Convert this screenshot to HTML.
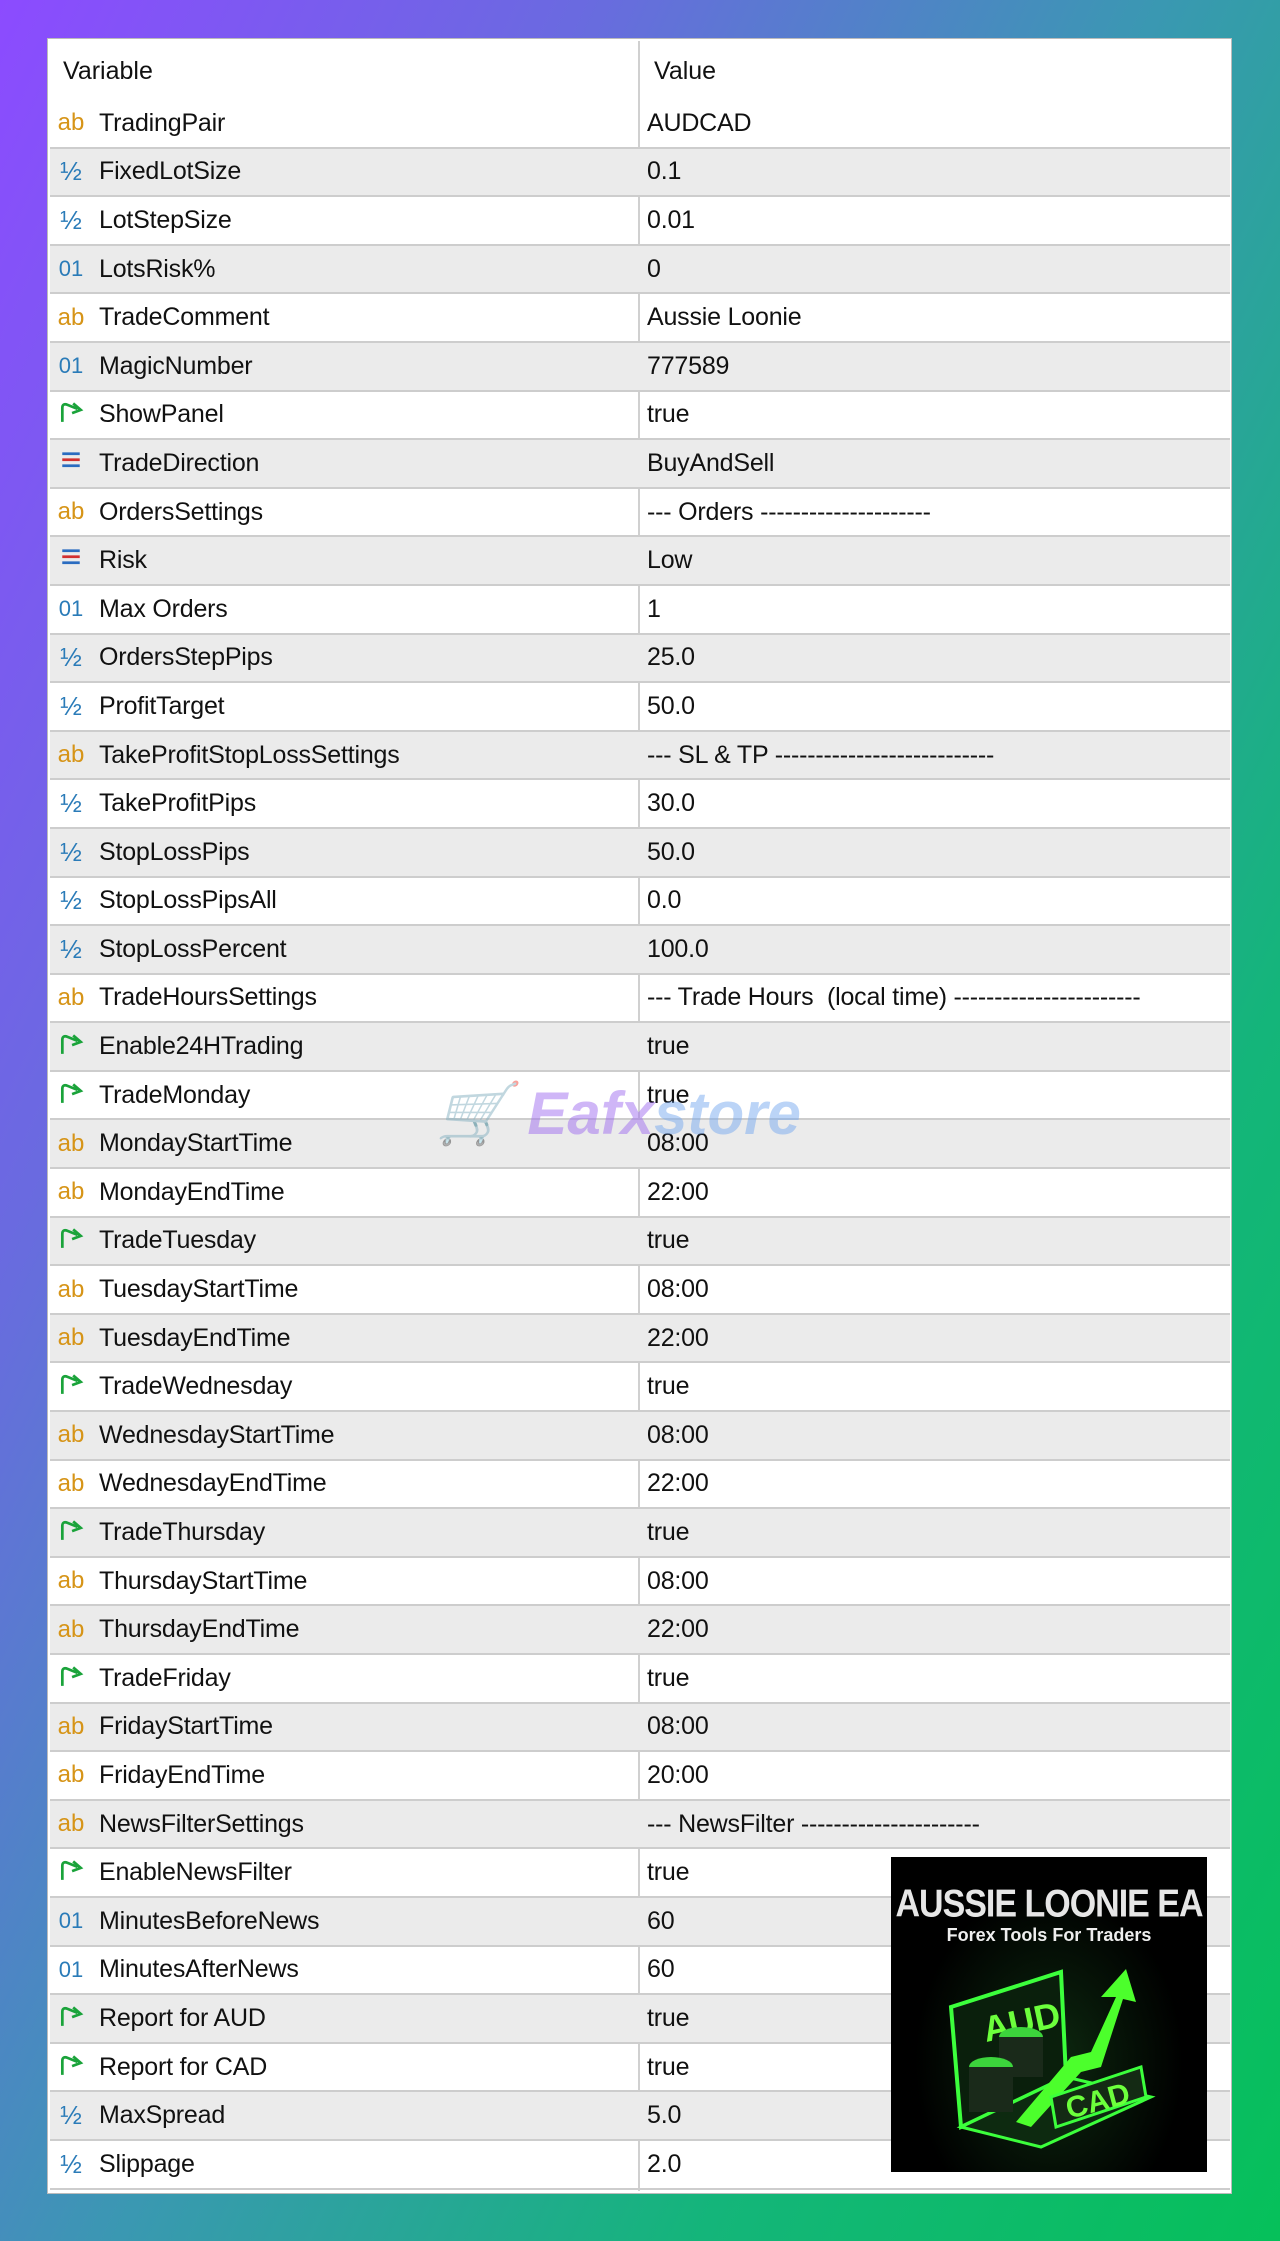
<!DOCTYPE html>
<html><head><meta charset="utf-8"><style>
*{margin:0;padding:0;box-sizing:border-box}
body{width:1280px;height:2241px;overflow:hidden;background:linear-gradient(115deg,#8c4bff 0%,#6a6ae0 25%,#3a98b2 50%,#14b57a 75%,#06c05a 100%);font-family:"Liberation Sans",sans-serif;position:relative}
#panel{position:absolute;left:47px;top:38px;width:1185px;height:2156px;background:#fff;border:1px solid #bbb}
.hdr{height:61px;position:relative;font-size:25px;color:#111}
.hdr span{position:absolute;top:18px}
.row{height:48.6px;display:flex;align-items:center;border-bottom:2px solid #cdcdcd;font-size:25px;color:#111;position:relative;width:1180px;margin-left:2px;letter-spacing:-0.2px}
.row.g{background:#ebebeb}
.ic{position:absolute;left:6px;width:30px;text-align:center;font-size:24px;letter-spacing:0}
.nm{position:absolute;left:49px}
.vl{position:absolute;left:597px}
.div{position:absolute;left:590px;top:2px;width:2px;height:2150px;background:#d0d0d0}
.ab{color:#d69417}
.hf{color:#2a7bb8;font-size:26px}
.i1{color:#2a7bb8;font-size:22px}
#logo{position:absolute;left:891px;top:1857px;width:316px;height:315px;background:radial-gradient(ellipse at 50% 65%,#0d2a10 0%,#000 60%);overflow:hidden}
#wm{position:absolute;left:436px;top:1078px;font-size:60px;font-weight:bold;font-style:italic;color:rgba(160,110,240,.5)}
#wm b{color:rgba(120,170,240,.5)}
</style></head><body>
<div id="panel">
<div class="div"></div>
<div class="hdr"><span style="left:15px">Variable</span><span style="left:606px">Value</span></div>
<div class="row"><span class="ic ab">ab</span><span class="nm">TradingPair</span><span class="vl">AUDCAD</span></div>
<div class="row g"><span class="ic hf">½</span><span class="nm">FixedLotSize</span><span class="vl">0.1</span></div>
<div class="row"><span class="ic hf">½</span><span class="nm">LotStepSize</span><span class="vl">0.01</span></div>
<div class="row g"><span class="ic i1">01</span><span class="nm">LotsRisk%</span><span class="vl">0</span></div>
<div class="row"><span class="ic ab">ab</span><span class="nm">TradeComment</span><span class="vl">Aussie Loonie</span></div>
<div class="row g"><span class="ic i1">01</span><span class="nm">MagicNumber</span><span class="vl">777589</span></div>
<div class="row"><span class="ic"><svg width="26" height="26" viewBox="0 0 24 24"><path d="M4 22V9Q4 5 8 6L18 10" fill="none" stroke="#1aa33a" stroke-width="2.5"/><path d="M14 5L21 11L13 14" fill="none" stroke="#1aa33a" stroke-width="2.5"/></svg></span><span class="nm">ShowPanel</span><span class="vl">true</span></div>
<div class="row g"><span class="ic"><svg width="24" height="24" viewBox="0 0 22 22"><rect x="3" y="4" width="16" height="2.5" fill="#2a6cc0"/><rect x="3" y="9.5" width="16" height="2.5" fill="#d23030"/><rect x="3" y="15" width="16" height="2.5" fill="#2a6cc0"/></svg></span><span class="nm">TradeDirection</span><span class="vl">BuyAndSell</span></div>
<div class="row"><span class="ic ab">ab</span><span class="nm">OrdersSettings</span><span class="vl">--- Orders ---------------------</span></div>
<div class="row g"><span class="ic"><svg width="24" height="24" viewBox="0 0 22 22"><rect x="3" y="4" width="16" height="2.5" fill="#2a6cc0"/><rect x="3" y="9.5" width="16" height="2.5" fill="#d23030"/><rect x="3" y="15" width="16" height="2.5" fill="#2a6cc0"/></svg></span><span class="nm">Risk</span><span class="vl">Low</span></div>
<div class="row"><span class="ic i1">01</span><span class="nm">Max Orders</span><span class="vl">1</span></div>
<div class="row g"><span class="ic hf">½</span><span class="nm">OrdersStepPips</span><span class="vl">25.0</span></div>
<div class="row"><span class="ic hf">½</span><span class="nm">ProfitTarget</span><span class="vl">50.0</span></div>
<div class="row g"><span class="ic ab">ab</span><span class="nm">TakeProfitStopLossSettings</span><span class="vl">--- SL &amp; TP ---------------------------</span></div>
<div class="row"><span class="ic hf">½</span><span class="nm">TakeProfitPips</span><span class="vl">30.0</span></div>
<div class="row g"><span class="ic hf">½</span><span class="nm">StopLossPips</span><span class="vl">50.0</span></div>
<div class="row"><span class="ic hf">½</span><span class="nm">StopLossPipsAll</span><span class="vl">0.0</span></div>
<div class="row g"><span class="ic hf">½</span><span class="nm">StopLossPercent</span><span class="vl">100.0</span></div>
<div class="row"><span class="ic ab">ab</span><span class="nm">TradeHoursSettings</span><span class="vl">--- Trade Hours &nbsp;(local time) -----------------------</span></div>
<div class="row g"><span class="ic"><svg width="26" height="26" viewBox="0 0 24 24"><path d="M4 22V9Q4 5 8 6L18 10" fill="none" stroke="#1aa33a" stroke-width="2.5"/><path d="M14 5L21 11L13 14" fill="none" stroke="#1aa33a" stroke-width="2.5"/></svg></span><span class="nm">Enable24HTrading</span><span class="vl">true</span></div>
<div class="row"><span class="ic"><svg width="26" height="26" viewBox="0 0 24 24"><path d="M4 22V9Q4 5 8 6L18 10" fill="none" stroke="#1aa33a" stroke-width="2.5"/><path d="M14 5L21 11L13 14" fill="none" stroke="#1aa33a" stroke-width="2.5"/></svg></span><span class="nm">TradeMonday</span><span class="vl">true</span></div>
<div class="row g"><span class="ic ab">ab</span><span class="nm">MondayStartTime</span><span class="vl">08:00</span></div>
<div class="row"><span class="ic ab">ab</span><span class="nm">MondayEndTime</span><span class="vl">22:00</span></div>
<div class="row g"><span class="ic"><svg width="26" height="26" viewBox="0 0 24 24"><path d="M4 22V9Q4 5 8 6L18 10" fill="none" stroke="#1aa33a" stroke-width="2.5"/><path d="M14 5L21 11L13 14" fill="none" stroke="#1aa33a" stroke-width="2.5"/></svg></span><span class="nm">TradeTuesday</span><span class="vl">true</span></div>
<div class="row"><span class="ic ab">ab</span><span class="nm">TuesdayStartTime</span><span class="vl">08:00</span></div>
<div class="row g"><span class="ic ab">ab</span><span class="nm">TuesdayEndTime</span><span class="vl">22:00</span></div>
<div class="row"><span class="ic"><svg width="26" height="26" viewBox="0 0 24 24"><path d="M4 22V9Q4 5 8 6L18 10" fill="none" stroke="#1aa33a" stroke-width="2.5"/><path d="M14 5L21 11L13 14" fill="none" stroke="#1aa33a" stroke-width="2.5"/></svg></span><span class="nm">TradeWednesday</span><span class="vl">true</span></div>
<div class="row g"><span class="ic ab">ab</span><span class="nm">WednesdayStartTime</span><span class="vl">08:00</span></div>
<div class="row"><span class="ic ab">ab</span><span class="nm">WednesdayEndTime</span><span class="vl">22:00</span></div>
<div class="row g"><span class="ic"><svg width="26" height="26" viewBox="0 0 24 24"><path d="M4 22V9Q4 5 8 6L18 10" fill="none" stroke="#1aa33a" stroke-width="2.5"/><path d="M14 5L21 11L13 14" fill="none" stroke="#1aa33a" stroke-width="2.5"/></svg></span><span class="nm">TradeThursday</span><span class="vl">true</span></div>
<div class="row"><span class="ic ab">ab</span><span class="nm">ThursdayStartTime</span><span class="vl">08:00</span></div>
<div class="row g"><span class="ic ab">ab</span><span class="nm">ThursdayEndTime</span><span class="vl">22:00</span></div>
<div class="row"><span class="ic"><svg width="26" height="26" viewBox="0 0 24 24"><path d="M4 22V9Q4 5 8 6L18 10" fill="none" stroke="#1aa33a" stroke-width="2.5"/><path d="M14 5L21 11L13 14" fill="none" stroke="#1aa33a" stroke-width="2.5"/></svg></span><span class="nm">TradeFriday</span><span class="vl">true</span></div>
<div class="row g"><span class="ic ab">ab</span><span class="nm">FridayStartTime</span><span class="vl">08:00</span></div>
<div class="row"><span class="ic ab">ab</span><span class="nm">FridayEndTime</span><span class="vl">20:00</span></div>
<div class="row g"><span class="ic ab">ab</span><span class="nm">NewsFilterSettings</span><span class="vl">--- NewsFilter ----------------------</span></div>
<div class="row"><span class="ic"><svg width="26" height="26" viewBox="0 0 24 24"><path d="M4 22V9Q4 5 8 6L18 10" fill="none" stroke="#1aa33a" stroke-width="2.5"/><path d="M14 5L21 11L13 14" fill="none" stroke="#1aa33a" stroke-width="2.5"/></svg></span><span class="nm">EnableNewsFilter</span><span class="vl">true</span></div>
<div class="row g"><span class="ic i1">01</span><span class="nm">MinutesBeforeNews</span><span class="vl">60</span></div>
<div class="row"><span class="ic i1">01</span><span class="nm">MinutesAfterNews</span><span class="vl">60</span></div>
<div class="row g"><span class="ic"><svg width="26" height="26" viewBox="0 0 24 24"><path d="M4 22V9Q4 5 8 6L18 10" fill="none" stroke="#1aa33a" stroke-width="2.5"/><path d="M14 5L21 11L13 14" fill="none" stroke="#1aa33a" stroke-width="2.5"/></svg></span><span class="nm">Report for AUD</span><span class="vl">true</span></div>
<div class="row"><span class="ic"><svg width="26" height="26" viewBox="0 0 24 24"><path d="M4 22V9Q4 5 8 6L18 10" fill="none" stroke="#1aa33a" stroke-width="2.5"/><path d="M14 5L21 11L13 14" fill="none" stroke="#1aa33a" stroke-width="2.5"/></svg></span><span class="nm">Report for CAD</span><span class="vl">true</span></div>
<div class="row g"><span class="ic hf">½</span><span class="nm">MaxSpread</span><span class="vl">5.0</span></div>
<div class="row"><span class="ic hf">½</span><span class="nm">Slippage</span><span class="vl">2.0</span></div>
</div>
<div id="wm">🛒 Eafx<b>store</b></div>
<div id="logo">
<div style="position:absolute;top:28px;width:100%;text-align:center;color:#e6e6e6;font-weight:bold;font-size:34px;letter-spacing:-1px;transform:scaleY(1.15)">AUSSIE LOONIE EA</div>
<div style="position:absolute;top:68px;width:100%;text-align:center;color:#eee;font-weight:bold;font-size:18px">Forex Tools For Traders</div>
<svg style="position:absolute;left:0;top:100px" width="316" height="215" viewBox="0 0 316 215">
<path d="M60 50 L170 15 L175 120 L70 170 Z" fill="#0a1f0c" stroke="#3cff3c" stroke-width="4"/>
<path d="M70 170 L175 120 L260 140 L150 190 Z" fill="#0d2a10" stroke="#3cff3c" stroke-width="3"/>
<text x="95" y="85" fill="#6cff3c" font-family="Liberation Sans" font-weight="bold" font-size="36" transform="rotate(-12 95 85)">AUD</text>
<ellipse cx="130" cy="80" rx="22" ry="10" fill="#3cd43c"/><rect x="108" y="80" width="44" height="40" fill="#1a2a1a"/>
<ellipse cx="100" cy="110" rx="22" ry="10" fill="#3cd43c"/><rect x="78" y="110" width="44" height="45" fill="#1a2a1a"/>
<path d="M125 165 L180 100 L200 95 L225 40 L210 40 L235 12 L245 45 L232 42 L210 110 L190 115 L140 170 Z" fill="#4cff2c"/>
<path d="M160 140 L250 110 L255 140 L165 170 Z" fill="#142a14" stroke="#3cff3c" stroke-width="3"/>
<text x="178" y="162" fill="#6cff3c" font-family="Liberation Sans" font-weight="bold" font-size="30" transform="rotate(-15 178 162)">CAD</text>
</svg>
</div>
</body></html>
